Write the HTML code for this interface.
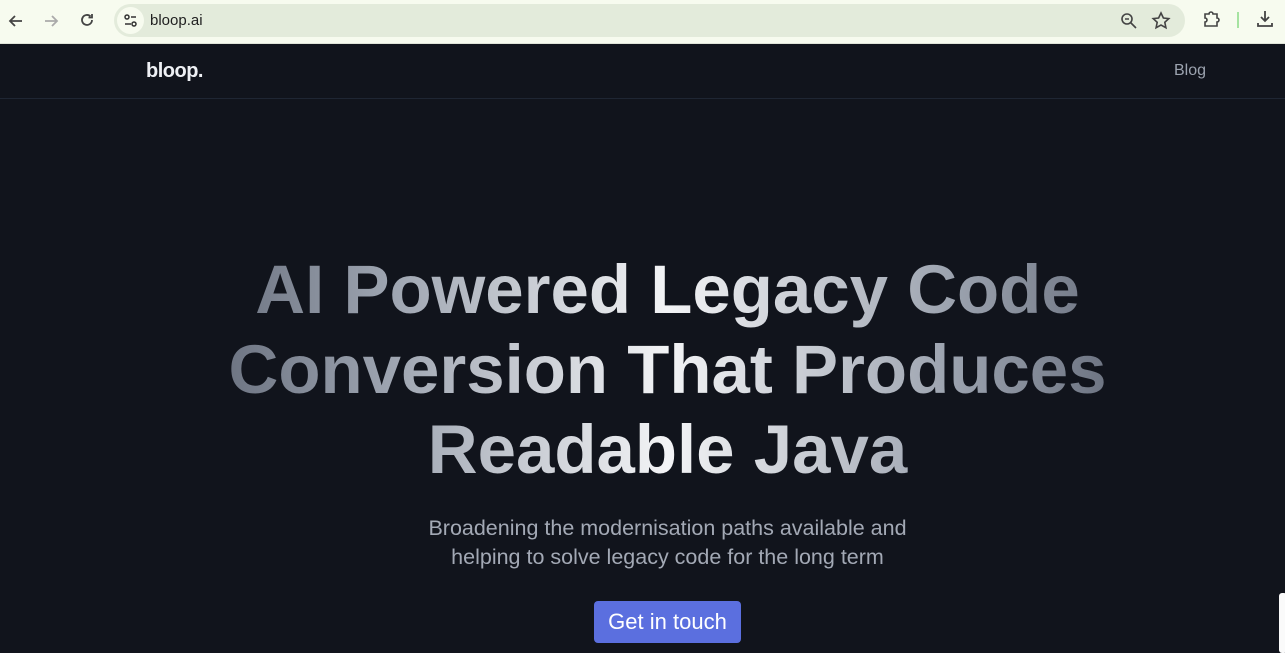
<!DOCTYPE html>
<html><head><style>
*{margin:0;padding:0;box-sizing:border-box}
body{width:1285px;height:648px;overflow:hidden;background:#11141c;font-family:"Liberation Sans",Arial,sans-serif;position:relative}
.chrome{position:absolute;top:0;left:0;width:1285px;height:44px;background:#f7fbef;border-bottom:1px solid #dfe4d8}
.url{position:absolute;left:114px;top:4px;width:1071px;height:33px;border-radius:17px;background:#e3ebdb}
.url .ic{position:absolute;left:3px;top:3px;width:27px;height:27px;border-radius:50%;background:#f7fbef}
.url span{position:absolute;left:36px;top:8px;font-size:15px;color:#1f1f1f}
.nav{position:absolute;top:44px;left:0;width:1285px;height:55px;border-bottom:1px solid #1f2633}
.logo{position:absolute;left:146px;top:60px;color:#eef0f4;font-weight:bold;font-size:20px;letter-spacing:-0.5px}
.blog{position:absolute;left:1174px;top:62px;color:#9ca3af;font-size:16px}
h1{position:absolute;top:250px;left:25px;width:1285px;text-align:center;font-size:69px;line-height:80px;font-weight:bold;
background:linear-gradient(90deg,#6b7280 15%,#9ca3af 28%,#f3f4f6 50%,#9ca3af 72%,#6b7280 85%);-webkit-background-clip:text;background-clip:text;color:transparent}
.sub{position:absolute;top:514px;left:25px;width:1285px;text-align:center;font-size:21.5px;line-height:29px;color:#a3a9b5}
.btn{position:absolute;left:594px;top:601px;width:147px;height:42px;background:#5b6fdf;border-radius:4px;color:#fff;font-size:22px;text-align:center;line-height:42px}
.side{position:absolute;left:1279px;top:593px;width:8px;height:60px;background:#fafafa;border-radius:3px}
</style></head><body>
<div class="chrome">
<svg style="position:absolute;left:6px;top:11px" width="20" height="20" viewBox="0 0 20 20" fill="none" stroke="#444" stroke-width="1.8"><path d="M16 10H4M9 5l-5 5 5 5"/></svg>
<svg style="position:absolute;left:41px;top:11px" width="20" height="20" viewBox="0 0 20 20" fill="none" stroke="#aaa" stroke-width="1.8"><path d="M4 10h12M11 5l5 5-5 5"/></svg>
<svg style="position:absolute;left:77px;top:10px" width="20" height="20" viewBox="0 0 20 20" fill="none" stroke="#444" stroke-width="1.8"><path d="M15 10a5 5 0 1 1-1.5-3.6M15 4v3.5h-3.5"/></svg>
<div class="url"><div class="ic"><svg width="27" height="27" viewBox="0 0 27 27" fill="none" stroke="#333" stroke-width="1.5"><circle cx="10" cy="10" r="2"/><path d="M14 10h5M8 17h6"/><circle cx="17" cy="17" r="2"/></svg></div><span>bloop.ai</span>
<svg style="position:absolute;left:1006px;top:8px" width="18" height="18" viewBox="0 0 18 18" fill="none" stroke="#444" stroke-width="1.6"><circle cx="7" cy="7" r="5"/><path d="M5 7h4M11 11l5 5"/></svg>
<svg style="position:absolute;left:1037px;top:7px" width="20" height="20" viewBox="0 0 20 20" fill="none" stroke="#444" stroke-width="1.6"><path d="M10 2l2.4 5 5.4.6-4 3.7 1.1 5.4L10 14l-4.9 2.7 1.1-5.4-4-3.7 5.4-.6z"/></svg>
</div>
<svg style="position:absolute;left:1202px;top:9px" width="20" height="20" viewBox="0 0 20 20" fill="none" stroke="#444" stroke-width="1.6"><path d="M3 5h4a2 2 0 0 1 4 0h4v4a2 2 0 0 1 0 4v4H3v-4a2 2 0 0 0 0-4z"/></svg>
<div style="position:absolute;left:1237px;top:12px;width:2px;height:16px;background:#a6e3a1"></div>
<svg style="position:absolute;left:1255px;top:9px" width="20" height="20" viewBox="0 0 20 20" fill="none" stroke="#444" stroke-width="1.8"><path d="M10 2v10M6 8l4 4 4-4M3 14v3h14v-3"/></svg>
</div>
<div class="nav"></div>
<div class="logo">bloop.</div>
<div class="blog">Blog</div>
<h1>AI Powered Legacy Code<br>Conversion That Produces<br>Readable Java</h1>
<div class="sub">Broadening the modernisation paths available and<br>helping to solve legacy code for the long term</div>
<div class="btn">Get in touch</div>
<div class="side"></div>
</body></html>
